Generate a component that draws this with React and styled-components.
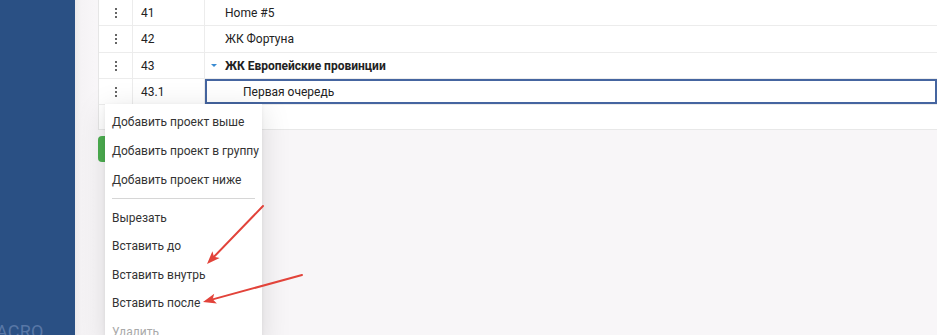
import React from "react";
import styled, { createGlobalStyle } from "styled-components";

const Global = createGlobalStyle`
  html, body { margin: 0; padding: 0; }
  body {
    font-family: Roboto, "Noto Sans", "Liberation Sans", sans-serif;
    width: 937px; height: 335px; overflow: hidden; background: #f8f6f8;
  }
  * { box-sizing: border-box; }
`;

const Page = styled.div`
  position: relative;
  display: flex;
  width: 937px;
  height: 335px;
  overflow: hidden;
`;

const Sidebar = styled.aside`
  width: 75px;
  flex: none;
  background: #2a5084;
  display: flex;
  flex-direction: column;
  justify-content: flex-end;
  overflow: hidden;
`;

const Logo = styled.div`
  color: #5877a6;
  font-size: 18px;
  line-height: 22px;
  margin: 0 0 -8px -4px;
  letter-spacing: 0.2px;
`;

const Main = styled.main`
  flex: 1;
  min-width: 0;
  background: linear-gradient(90deg, #ebe9eb 0px, #f5f3f5 6px, #f8f6f8 20px);
  padding-left: 23px;
  display: flex;
  flex-direction: column;
`;

const Table = styled.div`
  background: #fff;
  border-left: 1px solid #e6e6e6;
  border-bottom: 1px solid #e8e8e8;
  padding-bottom: 24px;
`;

const Row = styled.div`
  display: grid;
  grid-template-columns: 34px 72px 1fr;
  height: ${(p) => p.$h}px;
  border-bottom: 1px solid #ececec;
  font-size: 12px;
  color: #222;
`;

const Cell = styled.div`
  display: flex;
  align-items: center;
  border-right: 1px solid #ececec;
  min-width: 0;
  white-space: nowrap;
`;

const DotsCell = styled(Cell)`
  justify-content: center;
  padding-left: 1px;
`;

const Dots = styled.span`
  display: flex;
  flex-direction: column;
  gap: 2px;
  & > i {
    display: block;
    width: 2px;
    height: 2px;
    background: #666;
  }
`;

const NumCell = styled(Cell)`
  padding-left: 8px;
`;

const NameCell = styled(Cell)`
  border-right: none;
  padding-left: ${(p) => p.$indent}px;
  font-weight: ${(p) => (p.$bold ? 700 : 400)};
  ${(p) =>
    p.$active &&
    `border: 2px solid #4565a0; padding-left: ${p.$indent - 2}px;`}
`;

const Caret = styled.span`
  width: 0;
  height: 0;
  border-left: 3px solid transparent;
  border-right: 3px solid transparent;
  border-top: 3px solid #3a8bd2;
  margin: 0 8px 0 -14px;
`;

const GreenButton = styled.div`
  margin-top: 6px;
  width: 90px;
  height: 26px;
  border-radius: 4px;
  background: #4cae50;
`;

const Menu = styled.div`
  position: absolute;
  left: 105px;
  top: 104px;
  width: 157px;
  height: 240px;
  background: #fff;
  padding-top: 3px;
  box-shadow: 0 6px 28px rgba(0, 0, 0, 0.13), 0 1px 4px rgba(0, 0, 0, 0.06);
  font-size: 12px;
`;

const Item = styled.div`
  height: ${(p) => p.$h}px;
  display: flex;
  align-items: center;
  padding-left: 7px;
  color: ${(p) => (p.$disabled ? "#a9a9a9" : "#333")};
  white-space: nowrap;
`;

const Separator = styled.div`
  height: 1px;
  background: #d6d6d6;
  margin: 4px 7px 4.25px 7px;
`;

const Overlay = styled.svg`
  position: absolute;
  left: 0;
  top: 0;
  pointer-events: none;
`;

const rows = [
  { num: "41", name: "Home #5", indent: 20, h: 26 },
  { num: "42", name: "ЖК Фортуна", indent: 20, h: 27 },
  { num: "43", name: "ЖК Европейские провинции", indent: 20, bold: true, caret: true, h: 26 },
  { num: "43.1", name: "Первая очередь", indent: 38, active: true, h: 26 },
];

const Arrow = ({ x1, y1, x2, y2 }) => {
  const ang = Math.atan2(y2 - y1, x2 - x1);
  const len = 13;
  const w = 5;
  const bx = x2 - len * Math.cos(ang);
  const by = y2 - len * Math.sin(ang);
  const px = -Math.sin(ang) * w;
  const py = Math.cos(ang) * w;
  const nx = bx + 3 * Math.cos(ang);
  const ny = by + 3 * Math.sin(ang);
  return (
    <g>
      <line x1={x1} y1={y1} x2={nx} y2={ny} stroke="#e2433a" strokeWidth="2" strokeLinecap="round" />
      <polygon points={`${x2},${y2} ${bx + px},${by + py} ${nx},${ny} ${bx - px},${by - py}`} fill="#e2433a" />
    </g>
  );
};

export default function App() {
  return (
    <>
      <Global />
      <Page>
        <Sidebar>
          <Logo>ACRO</Logo>
        </Sidebar>
        <Main>
          <Table>
            {rows.map((r) => (
              <Row key={r.num} $h={r.h}>
                <DotsCell>
                  <Dots>
                    <i />
                    <i />
                    <i />
                  </Dots>
                </DotsCell>
                <NumCell>{r.num}</NumCell>
                <NameCell $indent={r.indent} $bold={r.bold} $active={r.active}>
                  {r.caret && <Caret />}
                  {r.name}
                </NameCell>
              </Row>
            ))}
          </Table>
          <GreenButton />
        </Main>
        <Menu>
          <Item $h={29}>Добавить проект выше</Item>
          <Item $h={29}>Добавить проект в группу</Item>
          <Item $h={29}>Добавить проект ниже</Item>
          <Separator />
          <Item $h={28.5}>Вырезать</Item>
          <Item $h={28.5}>Вставить до</Item>
          <Item $h={28.5}>Вставить внутрь</Item>
          <Item $h={28.5}>Вставить после</Item>
          <Item $h={28.5} $disabled>
            Удалить
          </Item>
        </Menu>
        <Overlay width="937" height="335">
          <Arrow x1={263} y1={206} x2={207} y2={264} />
          <Arrow x1={302} y1={275} x2={203} y2={302} />
        </Overlay>
      </Page>
    </>
  );
}
